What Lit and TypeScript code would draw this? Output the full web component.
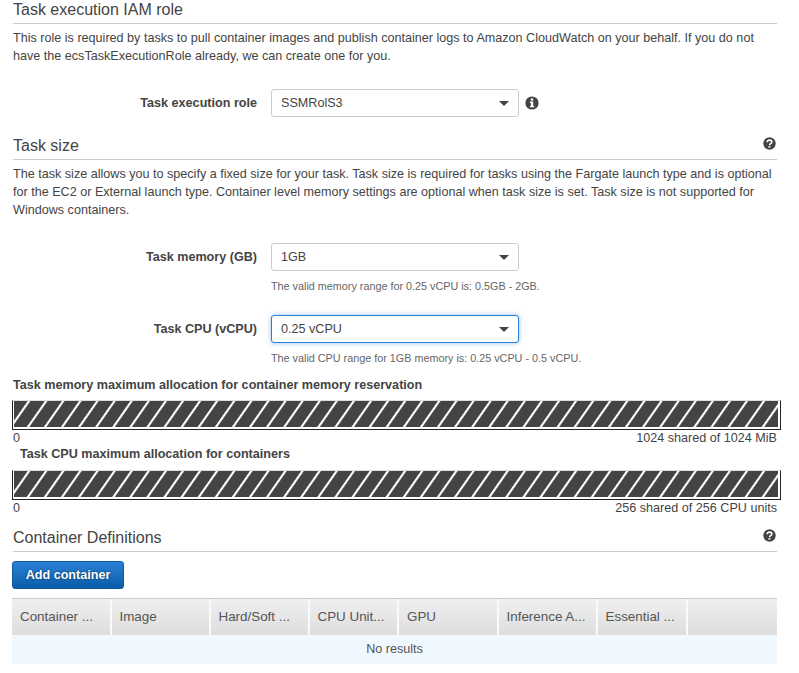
import { LitElement, html, css, svg } from "lit";
import { customElement } from "lit/decorators.js";

const infoIcon = html`<svg class="icon" viewBox="0 0 14 14" width="14" height="14" aria-hidden="true">
  <circle cx="7" cy="7" r="6.6" fill="#444"></circle>
  <rect x="5.8" y="2.4" width="2.4" height="2.2" fill="#fff"></rect>
  <path d="M4.9 5.6h3.3v4.3h1v1.4H4.9V9.9h1V7H4.9z" fill="#fff"></path>
</svg>`;

const helpIcon = html`<svg class="icon" viewBox="0 0 13 13" width="13" height="13" aria-hidden="true">
  <circle cx="6.5" cy="6.5" r="6.2" fill="#444"></circle>
  ${svg`<path d="M4.2 5.2c0-1.3 1-2.1 2.3-2.1s2.3.8 2.3 1.9c0 1.7-2.2 1.6-2.2 3" fill="none" stroke="#fff" stroke-width="1.6"></path>`}
  <rect x="5.5" y="8.9" width="1.8" height="1.7" fill="#fff"></rect>
</svg>`;

@customElement("app-root")
export class AppRoot extends LitElement {
  static styles = css`
    :host {
      display: block;
      width: 799px;
      height: 673px;
      overflow: hidden;
      background: #fff;
      font-family: "Liberation Sans", Arial, sans-serif;
      font-size: 12.6px;
      line-height: 18px;
      color: #444;
      box-sizing: border-box;
    }
    .page {
      padding: 0 22px 0 13px;
      display: flex;
      flex-direction: column;
    }
    .heading {
      display: flex;
      justify-content: space-between;
      align-items: flex-start;
      height: 22px;
      padding-top: 1px;
      border-bottom: 1px solid #ccc;
      font-size: 16px;
      line-height: 18px;
      color: #444;
    }
    .heading .icon { margin: 0 1px 0 0; }
    .text { margin: 5px 0 0; white-space: nowrap; }
    .row {
      display: flex;
      align-items: center;
      height: 28px;
    }
    .label {
      width: 244px;
      text-align: right;
      font-weight: 700;
      flex: none;
    }
    .select {
      margin-left: 14px;
      width: 248px;
      height: 28px;
      box-sizing: border-box;
      border: 1px solid #ccc;
      border-radius: 3px;
      padding: 0 9px;
      display: flex;
      align-items: center;
      justify-content: space-between;
      background: #fff;
    }
    .select.focus {
      border-color: #2b7fd4;
      box-shadow: 0 0 5px rgba(43, 127, 212, 0.5);
    }
    .caret {
      width: 0;
      height: 0;
      border-left: 5px solid transparent;
      border-right: 5px solid transparent;
      border-top: 5px solid #444;
    }
    .row > .icon { margin-left: 6px; }
    .hint {
      margin: 6px 0 0 258px;
      font-size: 10.8px;
      line-height: 18px;
      color: #666;
    }
    .alloc-title {
      font-weight: 700;
      line-height: 18px;
      color: #444;
    }
    .alloc-title.indent { padding-left: 7px; }
    .bar {
      height: 30px;
      width: 769px;
      margin: 7px 0 0 -1px;
      box-sizing: border-box;
      border-left: 1px solid #222;
      border-right: 1px solid #222;
      border-bottom: 1px solid #222;
      border-top: 1px solid #ddd;
      padding: 0 2px 2px 1px;
      background: #fff;
    }
    .bar.first { margin-top: 6px; }
    .stripes {
      height: 100%;
      background: repeating-linear-gradient(
        125deg,
        #444 0,
        #444 10.8px,
        #fff 11.8px,
        #fff 12.8px,
        #444 14px
      );
    }
    .scale {
      display: flex;
      justify-content: space-between;
      width: 764px;
      height: 15px;
      line-height: 16px;
    }
    .button {
      align-self: flex-start;
      margin: 9px 0 0 -1px;
      width: 112px;
      height: 28px;
      box-sizing: border-box;
      border: 1px solid #0f5a9c;
      border-radius: 3px;
      background: linear-gradient(#2a82d6, #0a5ca8);
      color: #fff;
      font-weight: 700;
      font-size: 12.6px;
      font-family: inherit;
      text-align: center;
      padding: 0;
      text-shadow: 0 0 2px rgba(0, 0, 0, 0.6);
    }
    .table {
      margin: 9px 0 0 -1px;
      width: 765px;
    }
    .thead {
      display: flex;
      height: 37px;
      box-sizing: border-box;
      border-top: 1px solid #ccc;
      background: linear-gradient(#efefef, #ddd);
    }
    .th {
      box-sizing: border-box;
      padding-left: 8px;
      font-size: 13.4px;
      line-height: 35px;
      color: #555;
      border-right: 2px solid #fafafa;
      white-space: nowrap;
    }
    .th:last-child { border-right: none; flex: 1; }
    .empty {
      height: 29px;
      line-height: 28px;
      text-align: center;
      background: #f0f8ff;
      color: #555;
    }
  `;

  render() {
    const cols: [string, number][] = [
      ["Container ...", 99.5],
      ["Image", 99],
      ["Hard/Soft ...", 99],
      ["CPU Unit...", 89.5],
      ["GPU", 99.5],
      ["Inference A...", 99],
      ["Essential ...", 90],
      ["", 0],
    ];
    return html`<div class="page">
      <div class="heading"><span>Task execution IAM role</span></div>
      <p class="text">This role is required by tasks to pull container images and publish container logs to Amazon CloudWatch on your behalf. If you do not<br />have the ecsTaskExecutionRole already, we can create one for you.</p>
      <div class="row" style="margin-top:24px">
        <div class="label">Task execution role</div>
        <div class="select"><span>SSMRolS3</span><span class="caret"></span></div>
        ${infoIcon}
      </div>
      <div class="heading" style="margin-top:19px"><span>Task size</span>${helpIcon}</div>
      <p class="text">The task size allows you to specify a fixed size for your task. Task size is required for tasks using the Fargate launch type and is optional<br />for the EC2 or External launch type. Container level memory settings are optional when task size is set. Task size is not supported for<br />Windows containers.</p>
      <div class="row" style="margin-top:24px">
        <div class="label">Task memory (GB)</div>
        <div class="select"><span>1GB</span><span class="caret"></span></div>
      </div>
      <div class="hint">The valid memory range for 0.25 vCPU is: 0.5GB - 2GB.</div>
      <div class="row" style="margin-top:20px">
        <div class="label">Task CPU (vCPU)</div>
        <div class="select focus"><span>0.25 vCPU</span><span class="caret"></span></div>
      </div>
      <div class="hint">The valid CPU range for 1GB memory is: 0.25 vCPU - 0.5 vCPU.</div>
      <div class="alloc-title" style="margin-top:9px">Task memory maximum allocation for container memory reservation</div>
      <div class="bar first"><div class="stripes"></div></div>
      <div class="scale"><span>0</span><span>1024 shared of 1024 MiB</span></div>
      <div class="alloc-title indent">Task CPU maximum allocation for containers</div>
      <div class="bar"><div class="stripes"></div></div>
      <div class="scale"><span>0</span><span>256 shared of 256 CPU units</span></div>
      <div class="heading" style="margin-top:13px"><span>Container Definitions</span>${helpIcon}</div>
      <button class="button">Add container</button>
      <div class="table">
        <div class="thead">
          ${cols.map(([t, w]) => html`<div class="th" style=${w ? `width:${w}px` : ""}>${t}</div>`)}
        </div>
        <div class="empty">No results</div>
      </div>
    </div>`;
  }
}
